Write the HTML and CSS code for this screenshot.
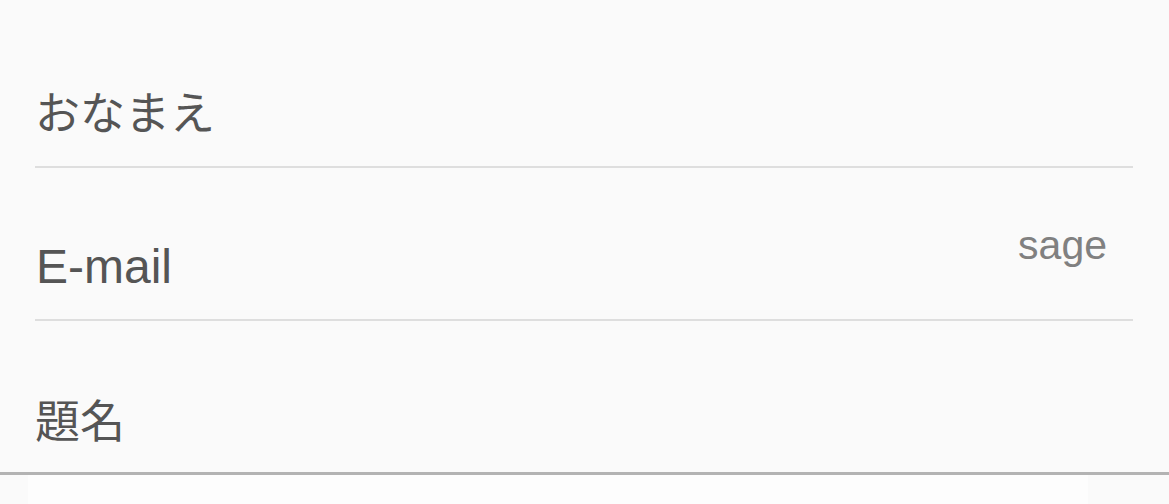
FILE: index.html
```html
<!DOCTYPE html>
<html lang="ja">
<head>
<meta charset="utf-8">
<title>Form</title>
<link rel="stylesheet" href="styles.css">
</head>
<body>
<div class="form">
  <div class="field">
    <span class="label jp">おなまえ</span>
  </div>
  <div class="field">
    <span class="label latin">E-mail</span>
    <span class="hint">sage</span>
  </div>
  <div class="field last">
    <span class="label jp">題名</span>
  </div>
</div>
<div class="toolbar">
  <div class="toolbar-box"></div>
</div>
</body>
</html>
```
FILE: styles.css
```css
html, body {
  margin: 0;
  padding: 0;
  background: #fafafa;
  overflow: hidden;
}
body {
  font-family: "Liberation Sans", "Noto Sans CJK JP", sans-serif;
  color: #555555;
}
.form {
  padding: 15px 36px 0 35px;
}
.field {
  height: 151px;
  border-bottom: 2px solid #dedede;
  display: flex;
  justify-content: space-between;
  align-items: flex-end;
  padding-right: 26px;
  box-sizing: content-box;
}
.field.last {
  border-bottom: none;
  height: 153px;
}
.label {
  line-height: 46px;
  padding-bottom: 29px;
}
.label.jp {
  font-family: "Noto Sans CJK JP", sans-serif;
  font-size: 45px;
  padding-bottom: 32px;
}
.label.latin {
  font-size: 48px;
  padding-left: 1px;
}
.hint {
  font-size: 41px;
  line-height: 42px;
  color: #808080;
  padding-bottom: 53px;
}
.toolbar {
  border-top: 3px solid #b3b3b3;
  margin-top: -2px;
}
.toolbar-box {
  margin: 0 81px 0 28px;
  height: 40px;
  background: #fdfdfd;
}
```
